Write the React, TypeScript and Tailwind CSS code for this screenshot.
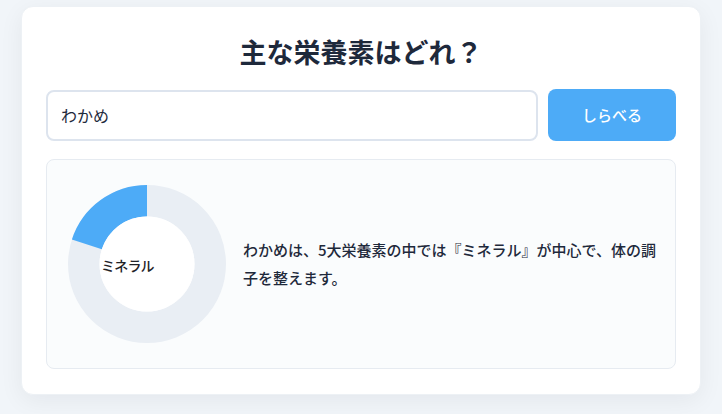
import { useState } from 'react';

const FONT = "font-['Noto_Sans_CJK_JP','Noto_Sans',sans-serif]";

function Donut({ label }: { label: string }) {
  // 5大栄養素のうち1つ = 20%
  return (
    <div className="relative w-[160px] h-[160px] shrink-0">
      <svg width="160" height="160" viewBox="0 0 160 160">
        <circle cx="80" cy="80" r="63.25" fill="none" stroke="#e9eef4" strokeWidth="31.5" />
        <path d="M 19.85 60.45 A 63.25 63.25 0 0 1 80 16.75" fill="none" stroke="#4dabf7" strokeWidth="31.5" />
        <circle cx="80" cy="80" r="47.5" fill="#ffffff" />
      </svg>
      <span className="absolute left-[34px] top-[81px] -translate-y-1/2 text-[14px] font-medium text-[#1f2328] leading-none tracking-[-0.8px]">
        {label}
      </span>
    </div>
  );
}

export default function App() {
  const [food, setFood] = useState('わかめ');

  return (
    <div className={`min-h-screen bg-[#f1f5f9] pt-[6px] ${FONT}`}>
      <div className="max-w-[680px] mx-auto bg-white rounded-xl border border-[#edf1f5] shadow-[0_6px_24px_rgba(15,23,42,0.06)] px-6 pt-6 pb-[25px]">
        <h1 className="text-[27px] font-bold text-center text-[#1e293b] leading-[42px]">
          主な栄養素はどれ？
        </h1>

        <div className="flex items-center gap-[10px] mt-[16px]">
          <input
            value={food}
            onChange={(e) => setFood(e.target.value)}
            className="flex-1 h-[51px] rounded-lg border-2 border-[#dde4ee] bg-white px-[13px] text-[16px] text-[#1e293b] outline-none"
          />
          <button className="w-[128px] h-[52px] rounded-lg bg-[#4dabf7] text-white text-[15px] font-medium">
            しらべる
          </button>
        </div>

        <div className="mt-[18px] h-[210px] rounded-lg border border-[#e6ebf1] bg-[#fafcfd] pl-[20px] pr-4 flex items-center gap-4">
          <Donut label="ミネラル" />
          <p className="flex-1 text-[15px] font-medium text-[#1e293b] leading-[28px]">
            わかめは、5大栄養素の中では『ミネラル』が中心で、体の調子を整えます。
          </p>
        </div>
      </div>
    </div>
  );
}
